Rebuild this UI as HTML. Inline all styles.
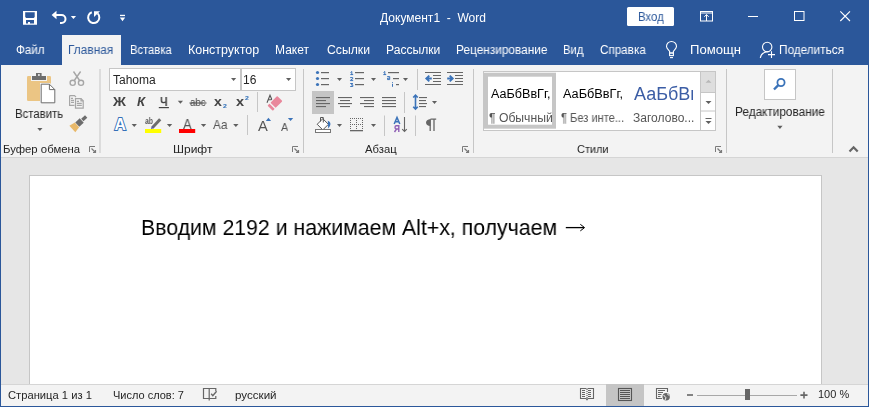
<!DOCTYPE html>
<html><head><meta charset="utf-8">
<style>
*{margin:0;padding:0;box-sizing:border-box}
html,body{width:869px;height:407px;overflow:hidden;background:#e6e6e6;font-family:"Liberation Sans",sans-serif}
.a{position:absolute}
.t{position:absolute;white-space:pre;line-height:1;transform-origin:0 0;will-change:transform}
#title{left:0;top:0;width:869px;height:65px;background:#2b579a}
#ribbon{left:0;top:65px;width:869px;height:92px;background:#f3f3f3}
#rline{left:0;top:157px;width:869px;height:1px;background:#d5d5d5}
#page{left:29px;top:175px;width:793px;height:300px;background:#fff;border:1px solid #c6c6c6}
#status{left:0;top:384px;width:869px;height:23px;background:#f3f3f3;border-top:1px solid #d5d5d5}
#bl{left:0;top:0;width:1px;height:407px;background:#2b579a}
#br{left:868px;top:0;width:1px;height:407px;background:#2b579a}
#bb{left:0;top:406px;width:869px;height:1px;background:#2b579a}
svg{position:absolute;left:0;top:0}
#clip3{position:absolute;left:630px;top:80px;width:63px;height:24px;overflow:hidden}
</style></head><body>
<div id="title" class="a"></div>
<div class="a" style="left:62px;top:35px;width:59px;height:30px;background:#f3f3f3"></div>
<div id="ribbon" class="a"></div>
<div id="rline" class="a"></div>
<div id="page" class="a"></div>
<div id="status" class="a"></div>
<svg width="869" height="407" viewBox="0 0 869 407"><path fill="#fff" fill-rule="evenodd" d="M23 11H37V24.8H23Z M25.2 12.2V17L26.2 18H33.7L34.7 17V12.2Z M26 20V23.6H28V22H30V23.6H34V20Z"/><path d="M53 15H61.5A3.6 3.6 0 0 1 61.5 23H60" fill="none" stroke="#fff" stroke-width="2"/><path d="M51.6 15L56.5 10.8V19.2Z" fill="#fff"/><path d="M70.8 16.1H76.1L73.44999999999999 19Z" fill="#fff"/><path d="M91.8 12.2A5.6 5.6 0 1 0 97.6 13.4" fill="none" stroke="#fff" stroke-width="2"/><path d="M94 11.2H100L94 17Z" fill="#fff"/><rect x="120" y="14.8" width="5" height="1.3" fill="#fff"/><path d="M119.8 17.6H125.2L122.5 21.3Z" fill="#fff"/><rect x="627" y="7" width="47" height="19" rx="1.5" fill="#fff"/><rect x="700.5" y="11.5" width="12" height="9.5" fill="none" stroke="#fff" stroke-width="1"/><path d="M701 13H712" stroke="#fff" stroke-width="1"/><path d="M706.5 14.5V21" stroke="#fff" stroke-width="1"/><path d="M704.3 16.8L706.5 14.6L708.7 16.8" fill="none" stroke="#fff" stroke-width="1"/><path d="M748 16.5H758" stroke="#fff" stroke-width="1"/><rect x="794.5" y="11.5" width="9.5" height="9" fill="none" stroke="#fff" stroke-width="1"/><path d="M840.3 11.3L850 21M850 11.3L840.3 21" stroke="#fff" stroke-width="1.1"/><path d="M669.6 53V51.2C668 49.5 666.5 48.2 666.5 46.5A5 5 0 0 1 676.5 46.5C676.5 48.2 675 49.5 673.4 51.2V53Z" fill="none" stroke="#fff" stroke-width="1.1"/><rect x="669.6" y="53" width="3.8" height="2.6" fill="none" stroke="#fff" stroke-width="1.1"/><path d="M670 57.6H673" stroke="#fff" stroke-width="1.1"/><circle cx="767.2" cy="47" r="4.7" fill="none" stroke="#fff" stroke-width="1.1"/><path d="M760.3 58C760.8 54.5 763.5 51.8 768.5 51.6" fill="none" stroke="#fff" stroke-width="1.1"/><path d="M771.5 51.2V58M768 54.6H775" stroke="#fff" stroke-width="1.1"/><rect x="27" y="76" width="24" height="25" rx="1.2" fill="#ebc584"/><path d="M31 75H47V81H31Z" fill="#f3f3f3"/><path d="M32 76H46V80H32Z M36 73H41.6V76H36Z" fill="#6d6d6d"/><rect x="38" y="74.2" width="1.8" height="1.6" fill="#f3f3f3"/><path d="M40 83H50L56 89V104H40Z" fill="#f3f3f3"/><path d="M41.2 84.2H49.4L54.8 89.6V102.8H41.2Z" fill="#fff" stroke="#6d6d6d" stroke-width="1"/><path d="M49.4 84.2V89.6H54.8" fill="none" stroke="#6d6d6d" stroke-width="1"/><path d="M37.3 128H42.5L39.9 131Z" fill="#5f5f5f"/><g fill="none" stroke="#a6a6a6" stroke-width="1.4"><circle cx="72.7" cy="82.8" r="2.6"/><circle cx="81" cy="82.8" r="2.6"/><path d="M73.5 71.5L79.6 80.5M80.6 71.5L74.3 80.5"/></g><g fill="none" stroke="#a6a6a6" stroke-width="1.2"><path d="M69.6 95.6H74.5L76 97.1M69.6 95.6V105.3H74.5"/><path d="M75.5 98.6H81L83.2 100.8V108.2H75.5Z"/><path d="M81 98.6V100.8H83.2"/><path d="M71 98.3H73M71 100.3H74M71 102.3H74M76.8 101.3H79M76.8 103.3H81.8M76.8 105.3H81.8"/></g><g transform="translate(78.6 123.4) rotate(-42)"><rect x="5" y="-1.7" width="5.2" height="3.4" fill="#6d6d6d"/><rect x="-1.8" y="-3" width="6" height="6" fill="#6d6d6d"/><path d="M-2.2 -3.2V3.2L-8.4 4.4V-4.4Z" fill="#e9b96a"/></g><rect x="99.5" y="69" width="1" height="84" fill="#c6c6c6"/><rect x="303.0" y="69" width="1" height="84" fill="#c6c6c6"/><rect x="473.0" y="69" width="1" height="84" fill="#c6c6c6"/><rect x="726.0" y="69" width="1" height="84" fill="#c6c6c6"/><rect x="832.0" y="69" width="1" height="84" fill="#c6c6c6"/><rect x="257.0" y="92" width="1" height="20" fill="#c6c6c6"/><rect x="247.0" y="115" width="1" height="20" fill="#c6c6c6"/><rect x="417.0" y="69" width="1" height="21" fill="#c6c6c6"/><rect x="404.0" y="92" width="1" height="21" fill="#c6c6c6"/><rect x="384.0" y="115.5" width="1" height="20.5" fill="#c6c6c6"/><rect x="415.0" y="115.5" width="1" height="20.5" fill="#c6c6c6"/><path d="M89.5 152V146.5H95" fill="none" stroke="#7a7a7a" stroke-width="1"/><path d="M91.5 148.5L95.5 152.5M93 152.5H95.5V150" fill="none" stroke="#7a7a7a" stroke-width="1.2"/><path d="M292.5 152V146.5H298" fill="none" stroke="#7a7a7a" stroke-width="1"/><path d="M294.5 148.5L298.5 152.5M296 152.5H298.5V150" fill="none" stroke="#7a7a7a" stroke-width="1.2"/><path d="M462.5 152V146.5H468" fill="none" stroke="#7a7a7a" stroke-width="1"/><path d="M464.5 148.5L468.5 152.5M466 152.5H468.5V150" fill="none" stroke="#7a7a7a" stroke-width="1.2"/><path d="M715.5 152V146.5H721" fill="none" stroke="#7a7a7a" stroke-width="1"/><path d="M717.5 148.5L721.5 152.5M719 152.5H721.5V150" fill="none" stroke="#7a7a7a" stroke-width="1.2"/><rect x="109.5" y="68.5" width="131" height="22" fill="#fff" stroke="#c6c6c6"/><rect x="241.5" y="68.5" width="54" height="22" fill="#fff" stroke="#c6c6c6"/><path d="M231 78H236.2L233.6 81Z" fill="#5f5f5f"/><path d="M286 78H291.2L288.6 81Z" fill="#5f5f5f"/><path d="M177.8 100.8H183L180.4 103.8Z" fill="#5f5f5f"/><rect x="158.8" y="107" width="10.1" height="1.2" fill="#444"/><rect x="189.5" y="102.5" width="17" height="1" fill="#444"/><path d="M131.6 124H136.9L134.25 127Z" fill="#5f5f5f"/><path d="M166.9 124H172.20000000000002L169.55 127Z" fill="#5f5f5f"/><path d="M200.9 124H206.20000000000002L203.55 127Z" fill="#5f5f5f"/><path d="M233.2 124H238.5L235.85 127Z" fill="#5f5f5f"/><rect x="145" y="129" width="16.2" height="4" fill="#ffff00"/><rect x="179" y="129" width="16.2" height="4" fill="#ff0000"/><path d="M152.3 127.8L160.2 119.2" stroke="#6d6d6d" stroke-width="3"/><path d="M151.3 128.6L153.5 126.6" stroke="#5b5ba0" stroke-width="1.5"/><path d="M265.8 121H271.1L268.45000000000005 117.8Z" fill="#3b73b9"/><text x="114.4" y="130" font-size="16.4" font-weight="bold" fill="#fff" stroke="#3570b8" stroke-width="1.9" paint-order="stroke" textLength="11.4" lengthAdjust="spacingAndGlyphs" font-family="Liberation Sans">A</text><path d="M287.9 117.9H293.2L290.54999999999995 121Z" fill="#3b73b9"/><path d="M267 102.8L270 95.2L273 102.2M268.2 99.8H272" fill="none" stroke="#555" stroke-width="1.1"/><g transform="translate(276.2 102) rotate(-45)"><rect x="-5.6" y="-4.6" width="11.4" height="9.2" rx="1" fill="#f3f3f3"/><rect x="-4.6" y="-3.6" width="9.6" height="7.4" rx="0.8" fill="#e9879b"/><rect x="-8.6" y="-3.6" width="2.6" height="7.4" rx="0.5" fill="#e9879b"/></g><circle cx="317.5" cy="72.5" r="1.6" fill="#3b73b9"/><rect x="321" y="72" width="8" height="1.2" fill="#666"/><circle cx="317.5" cy="78.5" r="1.6" fill="#3b73b9"/><rect x="321" y="78" width="8" height="1.2" fill="#666"/><circle cx="317.5" cy="84.5" r="1.6" fill="#3b73b9"/><rect x="321" y="84" width="8" height="1.2" fill="#666"/><path d="M337 78H342L339.5 81Z" fill="#5f5f5f"/><rect x="355" y="72" width="9" height="1.2" fill="#666"/><rect x="355" y="78" width="9" height="1.2" fill="#666"/><rect x="355" y="84" width="9" height="1.2" fill="#666"/><g fill="none" stroke="#3b73b9" stroke-width="1"><path d="M350.5 72.5L351.8 71.5V75M350.3 74.6H353.2"/><path d="M350.2 77.6H352.7V78.9L350.4 80.2V80.6H353.2"/><path d="M350.2 83.5H352.8L351.3 84.9H352.8V86.5H350.2"/></g><path d="M371 78H376L373.5 81Z" fill="#5f5f5f"/><g fill="none" stroke="#3b73b9" stroke-width="1"><path d="M383.5 72.5L384.8 71.5V75M383.3 74.6H386.2"/><path d="M387.2 76.6H389.7V79.6H387.5V78.2H389.5"/><path d="M392.5 82V82.8M392.5 83.8V86.8"/></g><rect x="388" y="72" width="11" height="1.2" fill="#666"/><rect x="393" y="78" width="6" height="1.2" fill="#666"/><rect x="396" y="84" width="3" height="1.2" fill="#666"/><path d="M403 78H408L405.5 81Z" fill="#5f5f5f"/><rect x="425" y="72" width="16" height="1" fill="#666"/><rect x="433" y="75" width="8" height="1" fill="#666"/><rect x="433" y="78" width="8" height="1" fill="#666"/><rect x="433" y="81" width="8" height="1" fill="#666"/><rect x="425" y="84" width="16" height="1" fill="#666"/><rect x="447" y="72" width="16" height="1" fill="#666"/><rect x="455" y="75" width="8" height="1" fill="#666"/><rect x="455" y="78" width="8" height="1" fill="#666"/><rect x="455" y="81" width="8" height="1" fill="#666"/><rect x="447" y="84" width="16" height="1" fill="#666"/><path d="M431.8 78.5H427M429.3 75.6L426.3 78.5L429.3 81.4" fill="none" stroke="#3b73b9" stroke-width="1.9"/><path d="M447.2 78.5H452M449.7 75.6L452.7 78.5L449.7 81.4" fill="none" stroke="#3b73b9" stroke-width="1.9"/><rect x="312" y="91" width="22" height="23" fill="#c5c5c5"/><rect x="316" y="97" width="14" height="1.1" fill="#666"/><rect x="316" y="100" width="10" height="1.1" fill="#666"/><rect x="316" y="103" width="14" height="1.1" fill="#666"/><rect x="316" y="106" width="10" height="1.1" fill="#666"/><rect x="338.0" y="97" width="14" height="1.1" fill="#666"/><rect x="340.0" y="100" width="10" height="1.1" fill="#666"/><rect x="338.0" y="103" width="14" height="1.1" fill="#666"/><rect x="340.0" y="106" width="10" height="1.1" fill="#666"/><rect x="360" y="97" width="14" height="1.1" fill="#666"/><rect x="364" y="100" width="10" height="1.1" fill="#666"/><rect x="360" y="103" width="14" height="1.1" fill="#666"/><rect x="364" y="106" width="10" height="1.1" fill="#666"/><rect x="382" y="97" width="14" height="1.1" fill="#666"/><rect x="382" y="100" width="14" height="1.1" fill="#666"/><rect x="382" y="103" width="14" height="1.1" fill="#666"/><rect x="382" y="106" width="14" height="1.1" fill="#666"/><path d="M415.5 95V109.2M413.2 97.5L415.5 95.2L417.8 97.5M413.2 106.7L415.5 109L417.8 106.7" fill="none" stroke="#3b73b9" stroke-width="1.6"/><rect x="419" y="97" width="8" height="1.1" fill="#666"/><rect x="419" y="100" width="7" height="1.1" fill="#666"/><rect x="419" y="103" width="8" height="1.1" fill="#666"/><rect x="419" y="106" width="7" height="1.1" fill="#666"/><path d="M432 101H437L434.5 104Z" fill="#5f5f5f"/><path d="M317.2 124.3L322.8 118.7L328.4 124.3L322.8 129.9Z" fill="#fff" stroke="#555" stroke-width="1"/><path d="M320.5 121.5V117.5H323.3V122.5" fill="none" stroke="#555" stroke-width="1"/><path d="M327.8 120.8C330.5 121.8 331.8 124.5 328.2 128.4Z" fill="#3b73b9"/><rect x="315.5" y="129.5" width="15" height="3" fill="#fff" stroke="#777" stroke-width="1"/><path d="M337 124H342L339.5 127Z" fill="#5f5f5f"/><g fill="#666"><rect x="350" y="118" width="1" height="1"/><rect x="350" y="124" width="1" height="1"/><rect x="352" y="118" width="1" height="1"/><rect x="352" y="124" width="1" height="1"/><rect x="354" y="118" width="1" height="1"/><rect x="354" y="124" width="1" height="1"/><rect x="356" y="118" width="1" height="1"/><rect x="356" y="124" width="1" height="1"/><rect x="358" y="118" width="1" height="1"/><rect x="358" y="124" width="1" height="1"/><rect x="360" y="118" width="1" height="1"/><rect x="360" y="124" width="1" height="1"/><rect x="362" y="118" width="1" height="1"/><rect x="362" y="124" width="1" height="1"/><rect x="350" y="120" width="1" height="1"/><rect x="356" y="120" width="1" height="1"/><rect x="362" y="120" width="1" height="1"/><rect x="350" y="122" width="1" height="1"/><rect x="356" y="122" width="1" height="1"/><rect x="362" y="122" width="1" height="1"/><rect x="350" y="126" width="1" height="1"/><rect x="356" y="126" width="1" height="1"/><rect x="362" y="126" width="1" height="1"/><rect x="350" y="128" width="1" height="1"/><rect x="356" y="128" width="1" height="1"/><rect x="362" y="128" width="1" height="1"/><rect x="350" y="130" width="13" height="1.3"/></g><path d="M371 124H376L373.5 127Z" fill="#5f5f5f"/><path d="M394.2 124L397 117.5L399.8 124M395.3 121.8H398.8" fill="none" stroke="#3b73b9" stroke-width="1.5"/><path d="M398.8 132V125.8H396.2C394.8 125.8 394.5 129 396.2 129H398.8M396.5 129L394.5 132" fill="none" stroke="#8f5fb5" stroke-width="1.4"/><path d="M404.5 117V131.5M402.2 129.2L404.5 131.5L406.8 129.2" fill="none" stroke="#666" stroke-width="1.1"/><path d="M430.5 119.2H436.2M430.2 119.2V131M434 119.2V131" fill="none" stroke="#666" stroke-width="1.3"/><path d="M430.5 119.2C427.5 119.2 426 120.8 426 122.6C426 124.6 427.6 126 430.5 126Z" fill="#666"/><rect x="483.5" y="71.5" width="232" height="59" fill="#fff" stroke="#c6c6c6"/><rect x="486" y="74.7" width="68" height="52" fill="none" stroke="#c6c6c6" stroke-width="4"/><rect x="701" y="72" width="14" height="20.5" fill="#dedede"/><path d="M700.5 71.5V130.5M701 92.5H715M701 111H715" stroke="#c6c6c6" stroke-width="1"/><path d="M705.5 82.8H711.5L708.5 79.8Z" fill="#b8b8b8"/><path d="M705.5 101H711.5L708.5 104Z" fill="#5f5f5f"/><rect x="705.5" y="118" width="6" height="1" fill="#666"/><path d="M705.5 121H711.5L708.5 124Z" fill="#5f5f5f"/><rect x="764.5" y="69.5" width="31" height="30" fill="#fff" stroke="#c6c6c6"/><circle cx="781" cy="82.5" r="3.6" fill="none" stroke="#3b73b9" stroke-width="1.8"/><path d="M778.3 85.2L774 89.5" stroke="#3b73b9" stroke-width="2.4"/><path d="M777.3 125.8H782.6L779.95 128.9Z" fill="#5f5f5f"/><path d="M849.5 151.6L853.6 147.3L857.7 151.6" fill="none" stroke="#666" stroke-width="2.2"/><path d="M606 384H644V406H606Z" fill="#c5c5c5"/><path d="M586.5 388.5H580.5V398.5H586L587 399.8L588 398.5H593.5V388.5H587.5" fill="none" stroke="#666" stroke-width="1.1"/><path d="M587 389V399" stroke="#666" stroke-width="1.2" stroke-dasharray="1 1"/><path d="M582 390.5H585M582 392.5H585M582 394.5H585M582 396.5H585M588 390.5H591M588 392.5H591M588 394.5H591M588 396.5H591" stroke="#666" stroke-width="1.1"/><rect x="618.5" y="388.5" width="13" height="12" fill="none" stroke="#555" stroke-width="1.1"/><path d="M620 390.5H630M620 392.5H630M620 394.5H630M620 396.5H630M620 398.5H630" stroke="#555" stroke-width="1"/><path d="M662 398.5H656.5V388.5H667.5V392" fill="none" stroke="#666" stroke-width="1.1"/><path d="M658 390.5H665M658 392.5H663M658 394.5H661.5M658 396.5H660.5" stroke="#666" stroke-width="1.1"/><circle cx="666.2" cy="396.7" r="4.1" fill="#f3f3f3"/><circle cx="666.2" cy="396.7" r="3.7" fill="#666"/><path d="M663.6 395L666 397.8L665 400M667 393.6L669.5 395.8" stroke="#f3f3f3" stroke-width="1" fill="none"/><path d="M209.2 388.5H203.5V398.5H209.2M209.2 388.5V400.5M209.2 398.5H215.8V396M209.2 388.5H215.8V391" fill="none" stroke="#666" stroke-width="1.2"/><path d="M211.2 393.8L212.8 395.6L216.6 391.2" fill="none" stroke="#666" stroke-width="1.4"/><rect x="687" y="394.2" width="6" height="1.6" fill="#666"/><rect x="697" y="395" width="100" height="1" fill="#a8a8a8"/><rect x="745" y="389" width="5" height="11" fill="#666"/><path d="M800.4 395.1H807.5M804 391.8V398.4" stroke="#666" stroke-width="1.6"/><path d="M565.8 227.6H584" stroke="#000" stroke-width="1.3"/><path d="M580.3 224.3L584.6 227.6L580.3 230.9" fill="none" stroke="#000" stroke-width="1"/></svg>
<span class="t" style="left:380.20px;top:12px;font-size:12px;color:#fff;transform:scaleX(1.0029);">Документ1  -  Word</span><span class="t" style="left:637.65px;top:11px;font-size:12px;color:#2b579a;transform:scaleX(0.9462);">Вход</span><span class="t" style="left:16.40px;top:44px;font-size:12px;color:#fff;transform:scaleX(0.9690);">Файл</span><span class="t" style="left:68.01px;top:44px;font-size:12px;color:#2b579a;transform:scaleX(0.9886);">Главная</span><span class="t" style="left:129.57px;top:44px;font-size:12px;color:#fff;transform:scaleX(0.9341);">Вставка</span><span class="t" style="left:188.16px;top:44px;font-size:12px;color:#fff;transform:scaleX(1.0403);">Конструктор</span><span class="t" style="left:275.21px;top:44px;font-size:12px;color:#fff;transform:scaleX(0.9939);">Макет</span><span class="t" style="left:327.30px;top:44px;font-size:12px;color:#fff;transform:scaleX(1.0167);">Ссылки</span><span class="t" style="left:386.29px;top:44px;font-size:12px;color:#fff;transform:scaleX(1.0094);">Рассылки</span><span class="t" style="left:456.41px;top:44px;font-size:12px;color:#fff;transform:scaleX(0.9870);">Рецензирование</span><span class="t" style="left:563.47px;top:44px;font-size:12px;color:#fff;transform:scaleX(0.9333);">Вид</span><span class="t" style="left:600.00px;top:44px;font-size:12px;color:#fff;transform:scaleX(0.9702);">Справка</span><span class="t" style="left:690.41px;top:44px;font-size:12px;color:#fff;transform:scaleX(1.0911);">Помощн</span><span class="t" style="left:778.62px;top:44px;font-size:12px;color:#fff;transform:scaleX(0.9815);">Поделиться</span><span class="t" style="left:14.65px;top:108px;font-size:12px;color:#262626;transform:scaleX(0.9480);">Вставить</span><span class="t" style="left:3.30px;top:144px;font-size:11.3px;color:#262626;transform:scaleX(1.0039);">Буфер обмена</span><span class="t" style="left:112.60px;top:74px;font-size:12px;color:#262626;transform:scaleX(0.9953);">Tahoma</span><span class="t" style="left:242.61px;top:74px;font-size:12px;color:#262626;transform:scaleX(0.9917);">16</span><span class="t" style="left:173.34px;top:144px;font-size:11.3px;color:#262626;transform:scaleX(1.0611);">Шрифт</span><span class="t" style="left:364.50px;top:144px;font-size:11.3px;color:#262626;transform:scaleX(0.9875);">Абзац</span><span class="t" style="left:576.60px;top:144px;font-size:11.3px;color:#262626;transform:scaleX(0.9688);">Стили</span><span class="t" style="left:734.62px;top:106px;font-size:12px;color:#262626;transform:scaleX(0.9822);">Редактирование</span><span class="t" style="left:490.90px;top:88px;font-size:12.5px;color:#000;transform:scaleX(1.0069);">АаБбВвГг,</span><span class="t" style="left:488.70px;top:112px;font-size:12px;color:#555;transform:scaleX(1.0145);">¶ Обычный</span><span class="t" style="left:562.60px;top:88px;font-size:12.5px;color:#000;transform:scaleX(1.0172);">АаБбВвГг,</span><span class="t" style="left:560.50px;top:112px;font-size:12px;color:#555;transform:scaleX(0.9250);">¶ Без инте...</span><span class="t" style="left:633.20px;top:112px;font-size:12px;color:#555;transform:scaleX(1.0033);">Заголово...</span><span class="t" style="left:141.44px;top:216px;font-size:22.9px;color:#000;transform:scaleX(0.9294);">Вводим 2192 и нажимаем Alt+x, получаем</span><span class="t" style="left:8.40px;top:390px;font-size:11px;color:#262626;transform:scaleX(1.0171);">Страница 1 из 1</span><span class="t" style="left:112.60px;top:390px;font-size:11px;color:#262626;transform:scaleX(0.9971);">Число слов: 7</span><span class="t" style="left:235.30px;top:390px;font-size:11px;color:#262626;transform:scaleX(1.0538);">русский</span><span class="t" style="left:817.71px;top:389px;font-size:11px;color:#262626;transform:scaleX(0.9867);">100 %</span><span class="t" style="left:113.40px;top:95px;font-size:13.2px;color:#444;transform:scaleX(1.0833);font-weight:bold">Ж</span><span class="t" style="left:137.00px;top:95px;font-size:13.2px;color:#444;transform:scaleX(0.9556);font-style:italic;font-weight:bold">К</span><span class="t" style="left:159.80px;top:95px;font-size:13.2px;color:#444;transform:scaleX(0.8222);font-weight:bold">Ч</span><span class="t" style="left:190.20px;top:97px;font-size:11px;color:#444;transform:scaleX(0.8833);">abc</span><span class="t" style="left:214.00px;top:95px;font-size:13.4px;color:#444;transform:scaleX(1.0571);font-weight:bold">x</span><span class="t" style="left:223.00px;top:103px;font-size:6px;color:#2e6fb8;transform:scaleX(1.1667);font-weight:bold">2</span><span class="t" style="left:235.90px;top:95px;font-size:13.4px;color:#444;transform:scaleX(1.0857);font-weight:bold">x</span><span class="t" style="left:244.80px;top:95px;font-size:6px;color:#2e6fb8;transform:scaleX(1.1667);font-weight:bold">2</span><span class="t" style="left:145.00px;top:117px;font-size:9.3px;color:#555;transform:scaleX(0.7273);font-weight:bold">ab</span><span class="t" style="left:183.00px;top:117px;font-size:14.5px;color:#555;transform:scaleX(0.9000);">A</span><span class="t" style="left:213.30px;top:118px;font-size:13px;color:#555;transform:scaleX(0.9062);">Aa</span><span class="t" style="left:258.40px;top:119px;font-size:14.7px;color:#555;transform:scaleX(0.9500);">A</span><span class="t" style="left:281.10px;top:121px;font-size:11.6px;color:#555;transform:scaleX(0.9250);">A</span>
<div id="clip3"><span class="t" style="left:4px;top:5px;font-size:18px;color:#3b5da5;transform:scaleX(1)">АаБбВвГг</span></div>
<div id="bl" class="a"></div>
<div id="br" class="a"></div>
<div id="bb" class="a"></div>
</body></html>
